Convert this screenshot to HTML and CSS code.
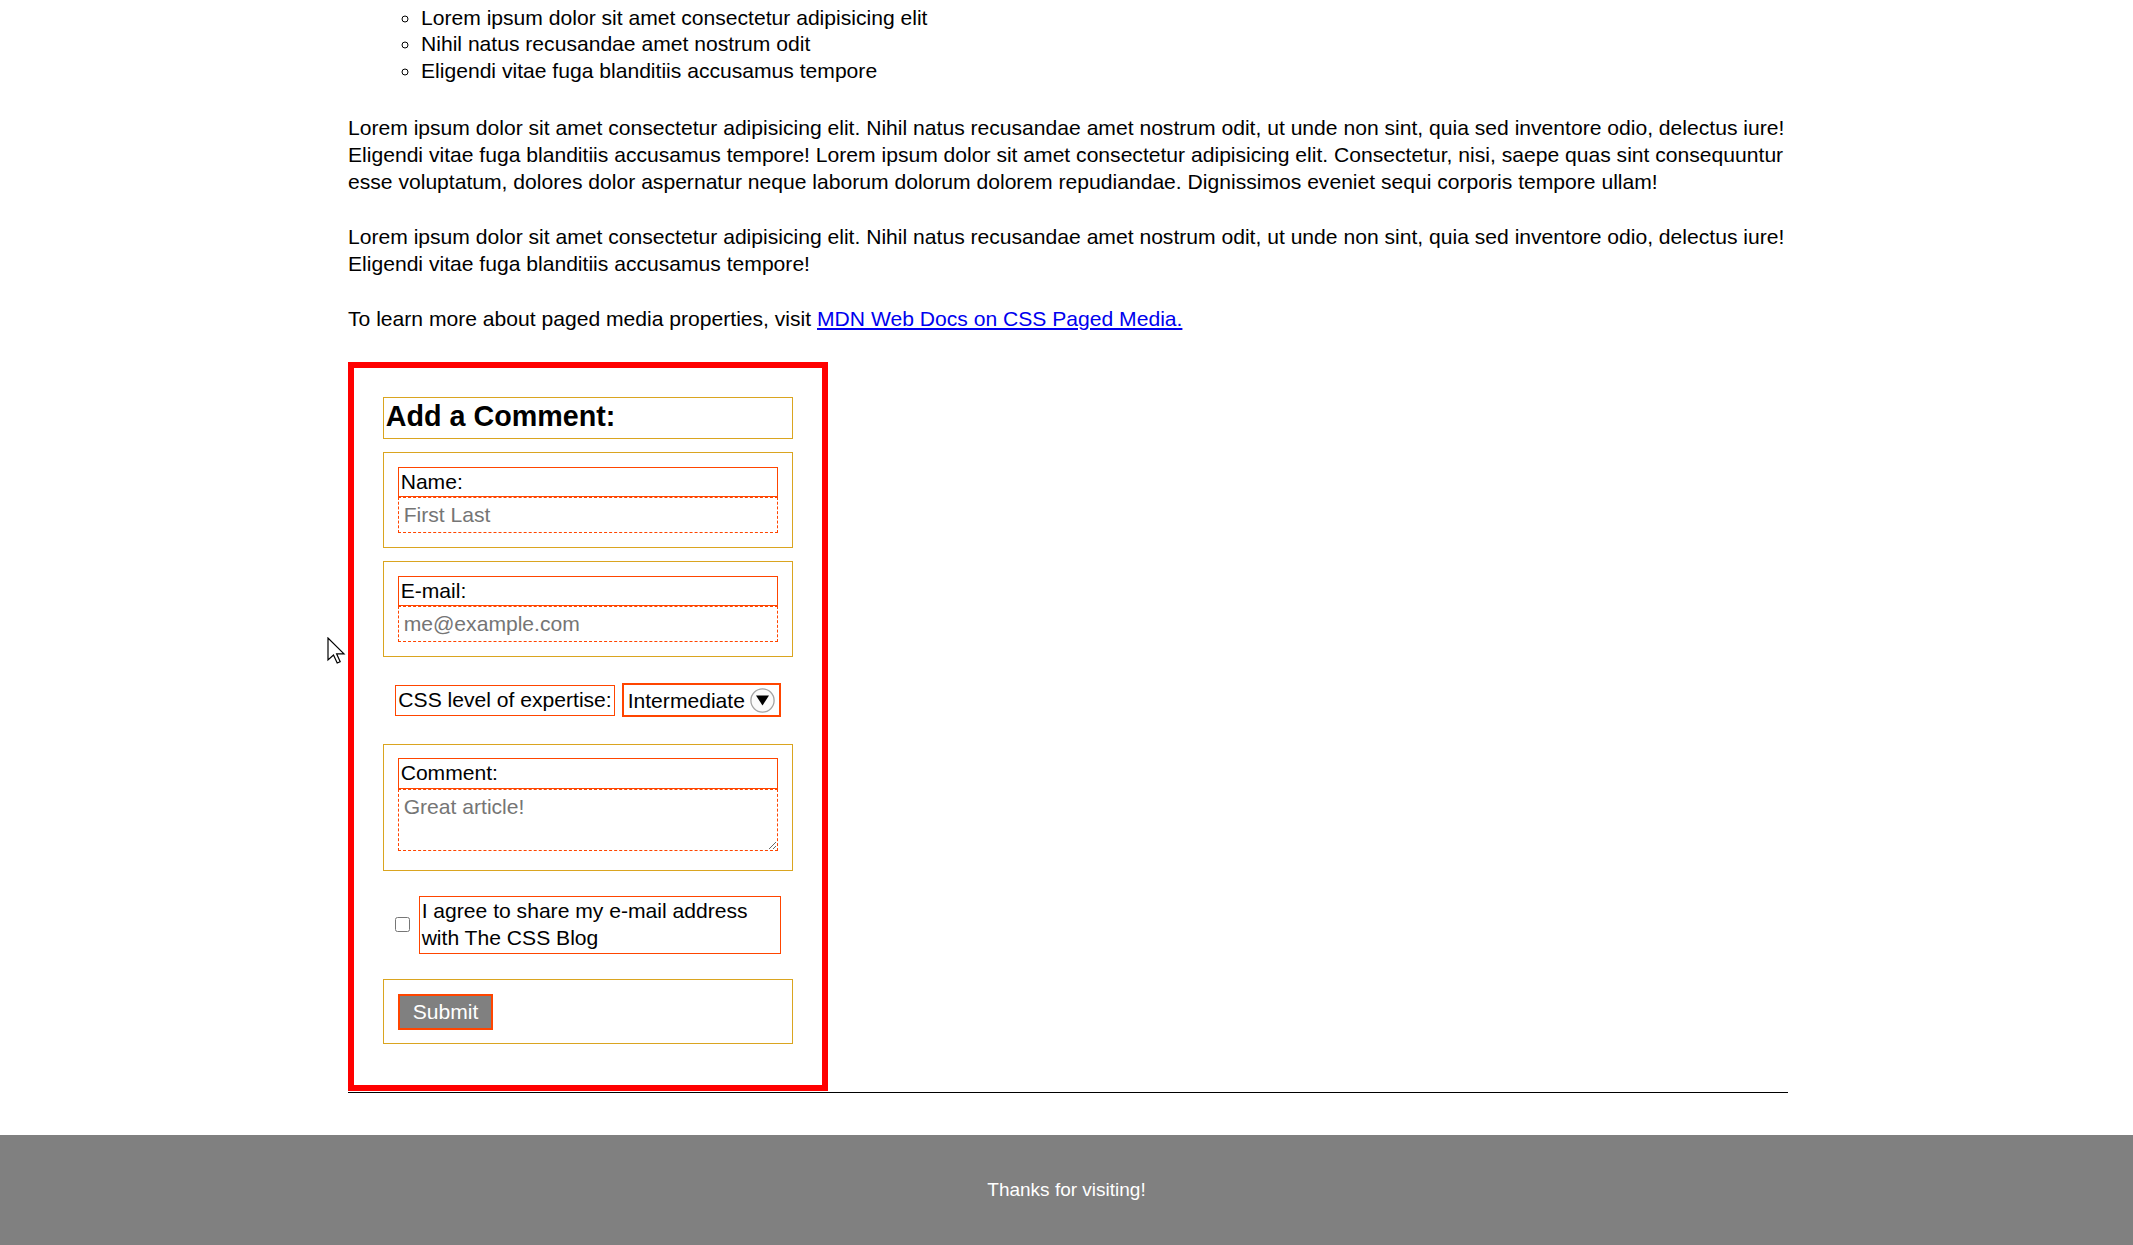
FILE: index.html
```html
<!DOCTYPE html>
<html lang="en">
<head>
<meta charset="utf-8">
<title>The CSS Blog</title>
<link rel="stylesheet" href="styles.css">
</head>
<body>
<main class="content">
  <ul class="sub-list">
    <li>Lorem ipsum dolor sit amet consectetur adipisicing elit</li>
    <li>Nihil natus recusandae amet nostrum odit</li>
    <li>Eligendi vitae fuga blanditiis accusamus tempore</li>
  </ul>
  <p class="text">Lorem ipsum dolor sit amet consectetur adipisicing elit. Nihil natus recusandae amet nostrum odit, ut unde non sint, quia sed inventore odio, delectus iure! Eligendi vitae fuga blanditiis accusamus tempore! Lorem ipsum dolor sit amet consectetur adipisicing elit. Consectetur, nisi, saepe quas sint consequuntur esse voluptatum, dolores dolor aspernatur neque laborum dolorum dolorem repudiandae. Dignissimos eveniet sequi corporis tempore ullam!</p>
  <p class="text">Lorem ipsum dolor sit amet consectetur adipisicing elit. Nihil natus recusandae amet nostrum odit, ut unde non sint, quia sed inventore odio, delectus iure! Eligendi vitae fuga blanditiis accusamus tempore!</p>
  <p class="text">To learn more about paged media properties, visit <a class="link" href="#">MDN Web Docs on CSS Paged Media.</a></p>

  <form class="comment-form">
    <h2 class="form-title">Add a Comment:</h2>
    <div class="box">
      <label class="tag block" for="name">Name:</label>
      <input class="entry" id="name" type="text" placeholder="First Last">
    </div>
    <div class="box">
      <label class="tag block" for="email">E-mail:</label>
      <input class="entry" id="email" type="email" placeholder="me@example.com">
    </div>
    <div class="row">
      <label class="tag" for="level">CSS level of expertise:</label>
      <span class="select-wrap">
        <select class="picker" id="level">
          <option>Intermediate</option>
        </select>
        <svg class="select-icon" width="25" height="25" viewBox="0 0 25 25" aria-hidden="true">
          <circle cx="12.5" cy="12.5" r="11.6" fill="#fbfbfb" stroke="#a3a3a3" stroke-width="1.3"/>
          <path d="M6 7.6 H19 L12.5 17.4 Z" fill="#000"/>
        </svg>
      </span>
    </div>
    <div class="box">
      <label class="tag block" for="comment">Comment:</label>
      <textarea class="entry note" id="comment" placeholder="Great article!"></textarea>
    </div>
    <div class="row check-row">
      <input class="check" id="agree" type="checkbox">
      <label class="tag grow" for="agree">I agree to share my e-mail address with The CSS Blog</label>
    </div>
    <div class="box">
      <button class="submit" type="button">Submit</button>
    </div>
  </form>
</main>
<footer class="site-footer">Thanks for visiting!</footer>

<svg class="cursor" width="22" height="30" viewBox="0 0 22 30" aria-hidden="true">
  <path d="M1 1 L1 23 L6.5 18 L10.2 26 L13.2 24.7 L9.6 16.8 L17 16.8 Z" fill="#fff" stroke="#000" stroke-width="1.2" stroke-linejoin="miter"/>
</svg>
</body>
</html>
```

FILE: styles.css
```css
html, body {
  margin: 0;
  padding: 0;
  background: #fff;
}

body {
  font-family: "Liberation Sans", Arial, sans-serif;
  font-size: 21.1px;
  line-height: 26.67px;
  color: #000;
}

.content {
  width: 1440px;
  margin-left: 348px;
  padding-top: 4.5px;
  padding-bottom: 1px;
  border-bottom: 1px solid #000;
}

.sub-list {
  margin: 0 0 30.7px;
  padding-left: 73px;
  list-style-type: circle;
}

.text {
  margin: 28.8px 0;
}

.link {
  color: #0000ee;
  text-decoration: underline;
}

.comment-form {
  box-sizing: border-box;
  width: 480px;
  margin-top: 29.2px;
  border: 6px solid #ff0000;
  padding: 29.33px 29.33px 40.5px;
  display: flex;
  flex-direction: column;
  gap: 13.65px;
}

.form-title {
  margin: 0;
  font-size: 28.7px;
  font-weight: bold;
  line-height: 35.5px;
  padding: 0.6px 0 3.3px 1.5px;
  border: 1px solid goldenrod;
}

.box {
  border: 1px solid goldenrod;
  padding: 13.33px;
}

.tag {
  border: 1px solid orangered;
  padding: 1px 2px;
  line-height: 26.67px;
}

.tag.block {
  display: block;
}

.entry {
  display: block;
  box-sizing: border-box;
  width: 100%;
  height: 36px;
  margin: 0;
  border: 1px dashed orangered;
  padding: 0 5px;
  font-family: inherit;
  font-size: 21.1px;
  color: #000;
  background: #fff;
  outline: none;
}

.entry::placeholder {
  color: #757575;
}

.note {
  height: 61.7px;
  padding: 4.4px 5px;
  line-height: 26.67px;
  margin-bottom: 5.6px;
  resize: both;
}

.row {
  display: flex;
  align-items: center;
  padding: 13px 12px;
}

.select-wrap {
  position: relative;
  margin-left: auto;
  display: block;
}

.picker {
  display: block;
  box-sizing: border-box;
  width: 159px;
  height: 34px;
  margin: 0;
  border: 2px solid orangered;
  border-radius: 0;
  padding: 0 0 0 4px;
  font-family: inherit;
  font-size: 21.1px;
  color: #000;
  background: #fff;
  -webkit-appearance: none;
  appearance: none;
  outline: none;
}

.select-icon {
  position: absolute;
  right: 6px;
  top: 4.7px;
  pointer-events: none;
}

.check-row {
  padding: 12px;
  gap: 8.3px;
}

.check {
  width: 15px;
  height: 15px;
  margin: 0;
  flex: none;
}

.grow {
  flex: 1;
}

.submit {
  display: block;
  margin: 0;
  border: 2px solid orangered;
  padding: 4px 13px;
  background: #808080;
  color: #fff;
  font-family: inherit;
  font-size: 21.1px;
  line-height: 24.4px;
  border-radius: 0;
}

.site-footer {
  margin-top: 42.3px;
  height: 110px;
  background: #808080;
  color: #fff;
  font-size: 19px;
  line-height: 110px;
  text-align: center;
}

.cursor {
  position: absolute;
  left: 327px;
  top: 637px;
}
```
